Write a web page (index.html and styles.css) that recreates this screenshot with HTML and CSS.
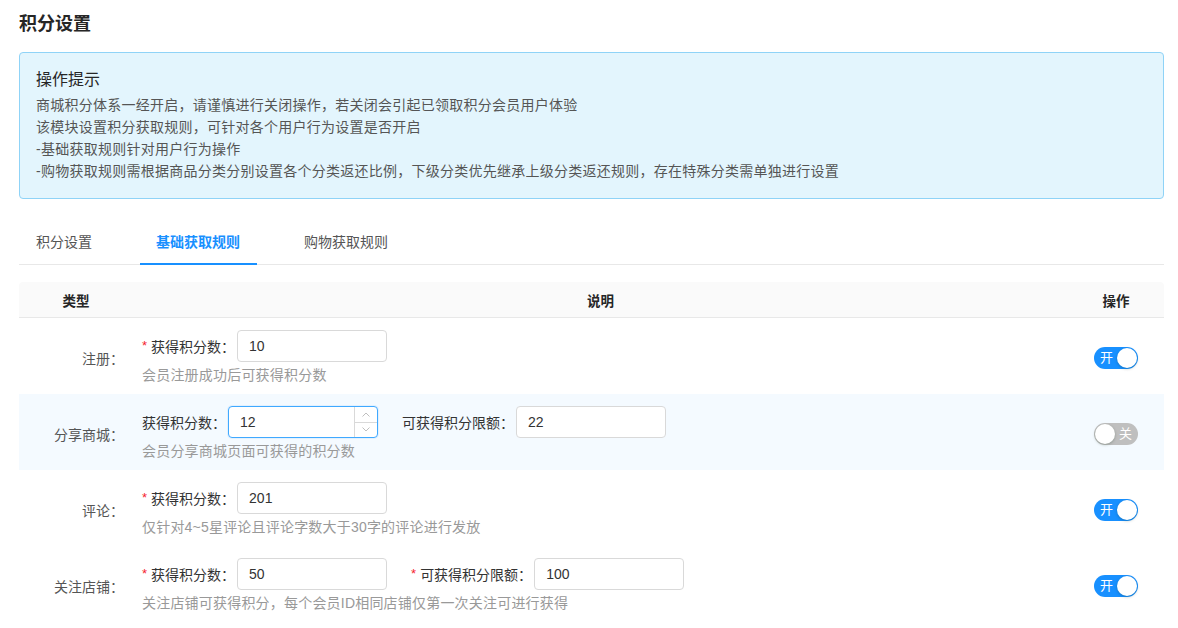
FILE: index.html
```html
<!DOCTYPE html>
<html lang="zh-CN">
<head>
    <meta charset="UTF-8">
    <meta name="viewport" content="width=device-width, initial-scale=1.0">
    <title>积分设置</title>
    <link rel="stylesheet" href="styles.css">
</head>
<body>
    <div class="page">
        <h1 class="page-title">积分设置</h1>

        <!-- 操作提示 -->
        <div class="tips">
            <div class="tips-title">操作提示</div>
            <p>商城积分体系一经开启，请谨慎进行关闭操作，若关闭会引起已领取积分会员用户体验</p>
            <p>该模块设置积分获取规则，可针对各个用户行为设置是否开启</p>
            <p>-基础获取规则针对用户行为操作</p>
            <p>-购物获取规则需根据商品分类分别设置各个分类返还比例，下级分类优先继承上级分类返还规则，存在特殊分类需单独进行设置</p>
        </div>

        <div class="tabs">
            <div class="tab">积分设置</div>
            <div class="tab active">基础获取规则</div>
            <div class="tab">购物获取规则</div>
        </div>

        <table class="rules">
            <colgroup>
                <col class="col-type">
                <col>
                <col class="col-action">
            </colgroup>
            <thead>
                <tr>
                    <th>类型</th>
                    <th>说明</th>
                    <th>操作</th>
                </tr>
            </thead>
            <tbody>
                <tr>
                    <td class="type">注册：</td>
                    <td class="desc">
                        <div class="fields">
                            <div class="field">
                                <label><span class="req">*</span>获得积分数：</label>
                                <input class="input" type="text" value="10">
                            </div>
                        </div>
                        <div class="hint">会员注册成功后可获得积分数</div>
                    </td>
                    <td class="action"><span class="switch on"><span class="switch-text">开</span><span class="knob"></span></span></td>
                </tr>
                <tr class="hover">
                    <td class="type">分享商城：</td>
                    <td class="desc">
                        <div class="fields">
                            <div class="field">
                                <label>获得积分数：</label>
                                <div class="number focused">
                                    <input class="input" type="text" value="12">
                                    <div class="number-handler">
                                        <span class="up">
                                            <svg width="8" height="5" viewBox="0 0 8 5"><path d="M0.5 4.5 L4 1 L7.5 4.5" fill="none" stroke="#bfbfbf" stroke-width="1"/></svg>
                                        </span>
                                        <span class="down">
                                            <svg width="8" height="5" viewBox="0 0 8 5"><path d="M0.5 0.5 L4 4 L7.5 0.5" fill="none" stroke="#bfbfbf" stroke-width="1"/></svg>
                                        </span>
                                    </div>
                                </div>
                            </div>
                            <div class="field">
                                <label>可获得积分限额：</label>
                                <input class="input" type="text" value="22">
                            </div>
                        </div>
                        <div class="hint">会员分享商城页面可获得的积分数</div>
                    </td>
                    <td class="action"><span class="switch"><span class="knob"></span><span class="switch-text">关</span></span></td>
                </tr>
                <tr>
                    <td class="type">评论：</td>
                    <td class="desc">
                        <div class="fields">
                            <div class="field">
                                <label><span class="req">*</span>获得积分数：</label>
                                <input class="input" type="text" value="201">
                            </div>
                        </div>
                        <div class="hint">仅针对4~5星评论且评论字数大于30字的评论进行发放</div>
                    </td>
                    <td class="action"><span class="switch on"><span class="switch-text">开</span><span class="knob"></span></span></td>
                </tr>
                <tr>
                    <td class="type">关注店铺：</td>
                    <td class="desc">
                        <div class="fields">
                            <div class="field">
                                <label><span class="req">*</span>获得积分数：</label>
                                <input class="input" type="text" value="50">
                            </div>
                            <div class="field">
                                <label><span class="req">*</span>可获得积分限额：</label>
                                <input class="input" type="text" value="100">
                            </div>
                        </div>
                        <div class="hint">关注店铺可获得积分，每个会员ID相同店铺仅第一次关注可进行获得</div>
                    </td>
                    <td class="action"><span class="switch on"><span class="switch-text">开</span><span class="knob"></span></span></td>
                </tr>
            </tbody>
        </table>
    </div>
</body>
</html>
```

FILE: styles.css
```css
/* General styling */
body {
    font-family: "Liberation Sans", "Noto Sans CJK SC", sans-serif;
    font-size: 14px;
    color: #333;
    background-color: #fff;
    margin: 0;
    padding: 0;
}

.page {
    padding: 12px 14px 0 19px;
}

.page-title {
    margin: 0 0 16px;
    font-size: 18px;
    line-height: 24px;
    font-weight: 600;
    color: #262626;
}

/* 操作提示 */
.tips {
    background-color: #e3f5fd;
    border: 1px solid #8fd3f7;
    border-radius: 4px;
    padding: 15px 16px 16px;
}

.tips-title {
    font-size: 16px;
    line-height: 24px;
    color: #262626;
    margin-bottom: 2px;
}

.tips p {
    margin: 0;
    font-size: 14px;
    line-height: 22px;
    letter-spacing: 0.25px;
    color: #555;
}

/* Tabs */
.tabs {
    display: flex;
    margin-top: 24px;
    border-bottom: 1px solid #e8e8e8;
}

.tab {
    padding: 8px 17px 10px 16px;
    margin-right: 31px;
    line-height: 22px;
    color: #555;
    border-bottom: 2px solid transparent;
    margin-bottom: -1px;
}

.tab:first-child {
    padding-left: 17px;
}

.tab.active {
    color: #1890ff;
    font-weight: 600;
    border-bottom-color: #1890ff;
}

/* Rules table */
.rules {
    width: 100%;
    margin-top: 17px;
    border-collapse: collapse;
    table-layout: fixed;
}

.col-type {
    width: 114px;
}

.col-action {
    width: 96px;
}

.rules th {
    background-color: #fafafa;
    border-bottom: 1px solid #e8e8e8;
    height: 35px;
    padding: 0;
    font-weight: 600;
    font-size: 13.5px;
    color: #262626;
    text-align: center;
}

.rules th:first-child {
    border-top-left-radius: 4px;
}

.rules th:last-child {
    border-top-right-radius: 4px;
}

.rules td {
    padding: 12px 0 9px;
    vertical-align: middle;
}

.rules tr.hover td {
    background-color: #f4faff;
}

.rules td.type {
    text-align: right;
    padding-right: 9px;
    color: #555;
}

.rules td.desc {
    padding-left: 9px;
}

.rules td.action {
    text-align: center;
}

.fields {
    display: flex;
    gap: 24px;
}

.field {
    display: flex;
    align-items: center;
}

.field label {
    margin-right: 2px;
    color: #333;
    white-space: nowrap;
}

.req {
    color: #f5222d;
    font-size: 13px;
    margin-right: 4px;
    position: relative;
    top: -2px;
}

.input {
    box-sizing: border-box;
    width: 150px;
    height: 32px;
    padding: 0 11px;
    border: 1px solid #d9d9d9;
    border-radius: 4px;
    font-family: "Liberation Sans", sans-serif;
    font-size: 14px;
    color: #333;
    background-color: #fff;
    outline: none;
}

/* number input with steppers */
.number {
    position: relative;
    width: 150px;
}

.number .input {
    width: 150px;
}

.number.focused .input {
    border-color: #40a9ff;
    box-shadow: 0 0 0 1px rgba(24, 144, 255, 0.08);
}

.number-handler {
    position: absolute;
    top: 1px;
    right: 1px;
    bottom: 1px;
    width: 22px;
    border-left: 1px solid #d9d9d9;
    display: flex;
    flex-direction: column;
}

.number-handler span {
    flex: 1;
    display: flex;
    align-items: center;
    justify-content: center;
}

.number-handler .up {
    border-bottom: 1px solid #d9d9d9;
}

.hint {
    margin-top: 3px;
    line-height: 20px;
    letter-spacing: 0.2px;
    color: #999;
}

/* Switch */
.switch {
    display: inline-flex;
    align-items: center;
    justify-content: space-between;
    box-sizing: border-box;
    width: 44px;
    height: 22px;
    padding: 0 1px 0 6px;
    border-radius: 11px;
    background-color: #1890ff;
    vertical-align: middle;
}

.switch:not(.on) {
    padding: 0 6px 0 1px;
    background-color: #bfbfbf;
}

.switch-text {
    color: #fff;
    font-size: 13px;
    line-height: 22px;
}

.knob {
    width: 20px;
    height: 20px;
    border-radius: 50%;
    background-color: #fff;
    box-shadow: 0 1px 3px rgba(0, 35, 11, 0.25);
}
```
